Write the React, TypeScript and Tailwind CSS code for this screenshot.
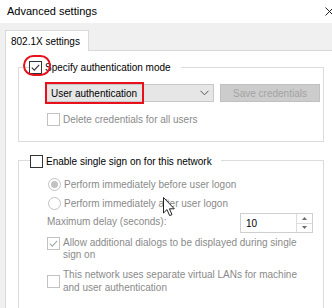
import type { ReactNode } from "react";

function Check({ checked = false, disabled = false }: { checked?: boolean; disabled?: boolean }) {
  return (
    <span
      className={`flex h-[13px] w-[13px] shrink-0 items-center justify-center border bg-white ${
        disabled ? "border-[#c2c2c2]" : "border-[#333333]"
      }`}
    >
      {checked && (
        <svg width="11" height="11" viewBox="0 0 11 11">
          <path
            d="M1.8 5.6 L4.3 8.1 L9.2 2.8"
            fill="none"
            stroke={disabled ? "#a8a8a8" : "#333333"}
            strokeWidth="1.1"
          />
        </svg>
      )}
    </span>
  );
}

function Radio({ on = false }: { on?: boolean }) {
  return (
    <span className="flex h-[13px] w-[13px] shrink-0 items-center justify-center rounded-full border border-[#c2c2c2] bg-white">
      {on && <span className="h-[7px] w-[7px] rounded-full bg-[#c2c2c2]" />}
    </span>
  );
}

function Row({ children, className = "" }: { children: ReactNode; className?: string }) {
  return <div className={`flex items-center gap-[3px] leading-[13px] ${className}`}>{children}</div>;
}

export default function App() {
  return (
    <div className="relative flex h-[308px] w-[332px] flex-col overflow-hidden bg-[#f0f0f0] font-['Liberation_Sans',Arial,sans-serif] text-[10px] text-black">
      {/* title bar */}
      <div className="flex h-[23px] shrink-0 items-center justify-between bg-white pl-[7px] pr-0">
        <span className="text-[11px] leading-[13px]">Advanced settings</span>
        <svg width="9" height="9" viewBox="0 0 9 9" className="-mr-[2px]">
          <path d="M0.5 0.5 L8.5 8.5 M8.5 0.5 L0.5 8.5" stroke="#222" strokeWidth="1" />
        </svg>
      </div>

      {/* tab strip */}
      <div className="relative z-10 flex shrink-0 pl-[5px] pt-[7px]">
        <div className="-mb-px flex h-[21px] w-[84px] items-center border border-b-0 border-[#d9d9d9] bg-white pl-[5px] leading-[13px]">
          802.1X settings
        </div>
      </div>

      {/* tab page */}
      <div className="ml-[5px] flex-1 border-l border-t border-[#d9d9d9] bg-white pl-[12px]">
        {/* group: authentication mode */}
        <div className="mt-[16px] h-[75px] w-[306px] border border-[#dcdcdc]">
          <Row className="-mt-[7px] ml-[10px] w-fit bg-white pr-[10px]">
            <Check checked />
            <span>Specify authentication mode</span>
          </Row>

          <div className="ml-[27px] mt-[10px] flex gap-[6px]">
            <div className="relative flex h-[18px] w-[168px] items-center justify-between border border-[#c8c8c8] bg-[#e6e6e6] pl-[4px] pr-[4px] leading-[13px]">
              <span>User authentication</span>
              <svg width="9" height="6" viewBox="0 0 9 6">
                <path d="M0.5 0.8 L4.5 4.8 L8.5 0.8" fill="none" stroke="#555" strokeWidth="1" />
              </svg>
              <span className="pointer-events-none absolute -left-[2px] -top-[3px] h-[22px] w-[99px] border-2 border-[#e8101a]" />
            </div>
            <div className="flex h-[18px] w-[100px] items-center justify-center border border-[#c0c0c0] bg-[#cccccc] leading-[13px] text-[#a3a3a3]">
              Save credentials
            </div>
          </div>

          <Row className="ml-[28px] mt-[11px] text-[#8a8a8a]">
            <Check disabled />
            <span>Delete credentials for all users</span>
          </Row>
        </div>

        {/* group: single sign on */}
        <div className="mt-[18px] h-[160px] w-[306px] border border-[#dcdcdc]">
          <Row className="-mt-[6px] ml-[11px] w-fit bg-white pr-[9px]">
            <Check />
            <span>Enable single sign on for this network</span>
          </Row>

          <div className="ml-[29px] mr-[10px] mt-[10px] flex flex-col text-[#8a8a8a]">
            <Row>
              <Radio on />
              <span>Perform immediately before user logon</span>
            </Row>
            <Row className="mt-[6px]">
              <Radio />
              <span>Perform immediately after user logon</span>
            </Row>

            <div className="-ml-[1px] mt-[3px] flex items-start justify-between">
              <span className="pt-[2px] leading-[13px]">Maximum delay (seconds):</span>
              <div className="flex h-[20px] w-[73px] border border-[#cfcfcf] bg-white">
                <span className="flex-1 pl-[5px] pt-[3px] leading-[13px] text-black">10</span>
                <div className="flex w-[16px] flex-col border-l border-[#dcdcdc]">
                  <div className="flex flex-1 items-center justify-center border-b border-[#dcdcdc]">
                    <svg width="5" height="3" viewBox="0 0 5 3">
                      <path d="M0 3 L2.5 0 L5 3 Z" fill="#6b6b6b" />
                    </svg>
                  </div>
                  <div className="flex flex-1 items-center justify-center">
                    <svg width="5" height="3" viewBox="0 0 5 3">
                      <path d="M0 0 L2.5 3 L5 0 Z" fill="#6b6b6b" />
                    </svg>
                  </div>
                </div>
              </div>
            </div>

            <div className="-ml-[1px] mt-[4px] flex items-start gap-[3px] leading-[12px]">
              <Check checked disabled />
              <span>
                Allow additional dialogs to be displayed during single
                <br />
                sign on
              </span>
            </div>

            <div className="-ml-[1px] mt-[7px] flex items-center gap-[3px] leading-[13px]">
              <Check disabled />
              <span>
                This network uses separate virtual LANs for machine
                <br />
                and user authentication
              </span>
            </div>
          </div>
        </div>
      </div>

      {/* annotation ring around first checkbox */}
      <span className="pointer-events-none absolute left-[23px] top-[55px] h-[21px] w-[28px] rounded-full border-2 border-[#e8101a]" />

      {/* mouse pointer */}
      <svg
        className="pointer-events-none absolute left-[163px] top-[197px]"
        width="13"
        height="20"
        viewBox="0 0 13 20"
      >
        <path
          d="M0.5 0.5 L0.5 16 L4 12.6 L6.6 18.6 L9 17.6 L6.4 11.8 L11.3 11.8 Z"
          fill="#ffffff"
          stroke="#222"
          strokeWidth="1"
        />
      </svg>
    </div>
  );
}
